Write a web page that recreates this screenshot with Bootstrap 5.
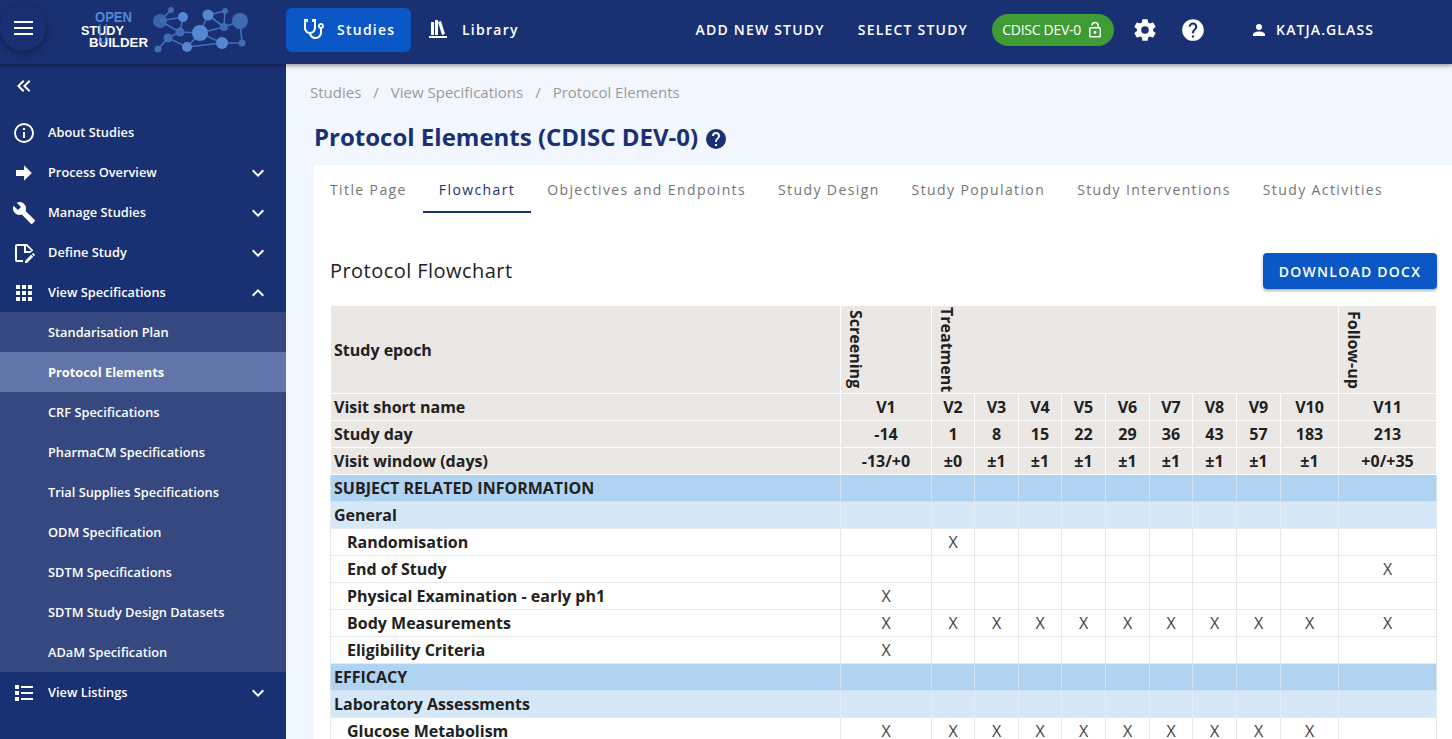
<!DOCTYPE html>
<html lang="en"><head><meta charset="utf-8"><title>Protocol Elements</title>
<link href="https://cdn.jsdelivr.net/npm/bootstrap@5.3.0/dist/css/bootstrap.min.css" rel="stylesheet">
<style>
html,body{height:739px;overflow:hidden}
body{font-family:"Open Sans",sans-serif;background:#f2f6fe;color:#212121}
.ic{fill:currentColor;display:block;flex:none}
.topbar{height:64px;background:#193073;color:#fff;box-shadow:0 2px 4px rgba(0,0,0,.35);position:relative;z-index:3;padding:0}
.burger{width:46px;height:46px;margin-top:5px;border-radius:50%;background:#193073;box-shadow:0 3px 6px rgba(0,0,0,.35);color:#fff;flex:none;border:0}
.burger span{display:block;width:19px;height:2px;background:#fff;margin:2px auto}
.logobox{width:190px;height:64px;margin-left:24px;flex:none}
.logobox text{font-family:"Liberation Sans Narrow","Liberation Sans",sans-serif;font-weight:700}
.topmain{color:#fff;font-size:14px;font-weight:600;letter-spacing:1.25px;height:44px;border-radius:6px;border:0;padding:0 0 2px;display:flex;align-items:center}
.topstudies{background:#0b57c5;width:125px;margin-left:26px;padding-left:16px;gap:11px}
.toplib{width:115px;margin-left:-1px;padding-left:16px;gap:12px;background:none}
.topacts{padding-bottom:5px}
.topact{color:#fff;font-size:14px;font-weight:600;letter-spacing:1.2px;text-transform:uppercase;background:none;border:0;padding:0}
.selbtn{margin-left:33px}
.studychip{background:#3f9c35;color:#fff;border-radius:16px;height:32px;width:122px;font-size:14px;letter-spacing:-.3px;font-weight:400;gap:5px;margin-left:24px}
.cogic{margin-left:18px}
.helpic{margin-left:22px}
.usertag{margin-left:44px;margin-right:78px;gap:8px;letter-spacing:1.1px}
.bodyrow{height:675px}
.sidepanel{width:286px;background:#193073;color:#fff;flex:none;padding-top:4px}
.collapser{height:36px;margin-bottom:8px;padding-left:12px;color:#fff}
.sideitem{height:40px;color:#fff;font-size:12.8px;font-weight:600;text-decoration:none;padding:2px 16px 0 12px}
.sideitem .lab{margin-left:12px;flex:1}
.subitem{height:40px;padding:2px 0 0 48px;background:#354880;color:#fff;font-size:12.8px;font-weight:600;text-decoration:none}
.subitem.on{background:#6274a8;font-weight:700}
.mainpane{flex:1;min-width:0;overflow:hidden}
.crumbs{margin:0;padding:18px 0 0 24px;height:54px;font-size:15px;line-height:20px;color:#9a9a9a}
.crumbs .breadcrumb-item{color:#9a9a9a}
.crumbs .breadcrumb-item+.breadcrumb-item{padding-left:12px}
.crumbs .breadcrumb-item+.breadcrumb-item::before{color:#9a9a9a;padding-right:12px}
.pagehead{height:47px;margin-left:28px;color:#193073;font-size:24px;font-weight:700;line-height:38px;gap:6px}
.pagehead .ic{margin-top:9px}
.sheet{background:#fff;margin-left:28px;height:574px;padding:0 16px}
.tabrow{height:48px;margin-left:-16px;flex-wrap:nowrap}
.tabrow .nav-link{color:#757575;font-size:14px;letter-spacing:1.39px;padding:0 16px;height:48px;line-height:50px;white-space:nowrap;border-radius:0}
.tabrow .nav-link.on{color:#193073;border-bottom:2px solid #193073}
.sheethead{height:92px;padding-top:40px}
.sheethead h2{font-size:20px;font-weight:400;letter-spacing:.45px;margin:0;line-height:36px}
.dlbtn{background:#0b57c5;color:#fff;height:36px;width:174px;margin-right:-1px;border:0;border-radius:4px;font-size:14px;font-weight:600;letter-spacing:1.25px;box-shadow:0 2px 3px rgba(0,0,0,.3);padding:0}
.flow{table-layout:fixed;width:1106px;margin:0;border-collapse:collapse;font-size:16px;line-height:24px;color:#212121}
.flow td,.flow th{padding:1px 3px;border:1px solid #e8e8e8;text-align:center;font-weight:400;white-space:nowrap;color:#444}
.flow td:first-child,.flow th:first-child{text-align:left;font-weight:700;color:#212121}
.flow .hd td,.flow .hd th{background:#ebe7e4;border-color:#fff;font-weight:700;color:#212121}
.flow .epoch{height:88px}
.flow .hd .vert{text-align:left;vertical-align:middle;padding:0 0 0 3px;font-weight:700}
.flow .vert span{writing-mode:vertical-rl;display:block;line-height:24px;height:87px;text-align:center}
.flow .soc td{background:#b0d3f2;border-color:#d3e2ee}
.flow .grp td{background:#d6e8f7;border-color:#e3edf5}
.flow td.lvl{padding-left:16px}
.w0{width:510px}.w1{width:91px}.w2{width:43px}.w3{width:44px}.w4{width:58px}.w5{width:98px}
</style></head>
<body>
<svg width="0" height="0" class="position-absolute"><defs>
<symbol id="i-steth" viewBox="0 0 24 24"><path d="M19 8C19.56 8 20 8.43 20 9S19.56 10 19 10C18.43 10 18 9.56 18 9S18.43 8 19 8M2 2V11C2 13.96 4.19 16.5 7.14 16.91C7.76 19.92 10.42 22 13.5 22C17.09 22 20 19.09 20 15.5V11.81C21.16 11.39 22 10.29 22 9C22 7.34 20.66 6 19 6S16 7.34 16 9C16 10.29 16.84 11.4 18 11.81V15.41C18 17.91 16 19.91 13.5 19.91C11.5 19.91 9.82 18.7 9.22 16.9C12 16.3 14 13.8 14 11V2H10V5H12V11C12 13.21 10.21 15 8 15S4 13.21 4 11V5H6V2H2Z"/></symbol>
<symbol id="i-shelf" viewBox="0 0 24 24"><path d="M9 3V18H12V3H9M12 5L16 18L19 17L15 4L12 5M5 5V18H8V5H5M3 19V21H21V19H3Z"/></symbol>
<symbol id="i-cog" viewBox="0 0 24 24"><path d="M12,15.5A3.5,3.5 0 0,1 8.5,12A3.5,3.5 0 0,1 12,8.5A3.5,3.5 0 0,1 15.5,12A3.5,3.5 0 0,1 12,15.5M19.43,12.97C19.47,12.65 19.5,12.33 19.5,12C19.5,11.67 19.47,11.34 19.43,11L21.54,9.37C21.73,9.22 21.78,8.95 21.66,8.73L19.66,5.27C19.54,5.05 19.27,4.96 19.05,5.05L16.56,6.05C16.04,5.66 15.5,5.32 14.87,5.07L14.5,2.42C14.46,2.18 14.25,2 14,2H10C9.75,2 9.54,2.18 9.5,2.42L9.13,5.07C8.5,5.32 7.96,5.66 7.44,6.05L4.95,5.05C4.73,4.96 4.46,5.05 4.34,5.27L2.34,8.73C2.21,8.95 2.27,9.22 2.46,9.37L4.57,11C4.53,11.34 4.5,11.67 4.5,12C4.5,12.33 4.53,12.65 4.57,12.97L2.46,14.63C2.27,14.78 2.21,15.05 2.34,15.27L4.34,18.73C4.46,18.95 4.73,19.03 4.95,18.95L7.44,17.94C7.96,18.34 8.5,18.68 9.13,18.93L9.5,21.58C9.54,21.82 9.75,22 10,22H14C14.25,22 14.46,21.82 14.5,21.58L14.87,18.93C15.5,18.67 16.04,18.34 16.56,17.94L19.05,18.95C19.27,19.03 19.54,18.95 19.66,18.73L21.66,15.27C21.78,15.05 21.73,14.78 21.54,14.63L19.43,12.97Z"/></symbol>
<symbol id="i-help" viewBox="0 0 24 24"><path d="M15.07,11.25L14.17,12.17C13.45,12.89 13,13.5 13,15H11V14.5C11,13.39 11.45,12.39 12.17,11.67L13.41,10.41C13.78,10.05 14,9.55 14,9C14,7.89 13.1,7 12,7A2,2 0 0,0 10,9H8A4,4 0 0,1 12,5A4,4 0 0,1 16,9C16,9.88 15.64,10.67 15.07,11.25M13,19H11V17H13M12,2A10,10 0 0,0 2,12A10,10 0 0,0 12,22A10,10 0 0,0 22,12C22,6.47 17.5,2 12,2Z"/></symbol>
<symbol id="i-user" viewBox="0 0 24 24"><path d="M12,4A4,4 0 0,1 16,8A4,4 0 0,1 12,12A4,4 0 0,1 8,8A4,4 0 0,1 12,4M12,14C16.42,14 20,15.79 20,18V20H4V18C4,15.79 7.58,14 12,14Z"/></symbol>
<symbol id="i-lock" viewBox="0 0 24 24"><path d="M12 13a2 2 0 1 1 0 4 2 2 0 0 1 0-4M6 8h9V6a3 3 0 0 0-6 0H7a5 5 0 0 1 10 0v2h1a2 2 0 0 1 2 2v10a2 2 0 0 1-2 2H6a2 2 0 0 1-2-2V10a2 2 0 0 1 2-2m0 2v10h12V10H6Z"/></symbol>
<symbol id="i-info" viewBox="0 0 24 24"><path d="M11,9H13V7H11M12,20C7.59,20 4,16.41 4,12C4,7.59 7.59,4 12,4C16.41,4 20,7.59 20,12C20,16.41 16.41,20 12,20M12,2A10,10 0 0,0 2,12A10,10 0 0,0 12,22A10,10 0 0,0 22,12A10,10 0 0,0 12,2M11,17H13V11H11V17Z"/></symbol>
<symbol id="i-arrow" viewBox="0 0 24 24"><path d="M4,15V9H12V4.16L19.84,12L12,19.84V15H4Z"/></symbol>
<symbol id="i-wrench" viewBox="0 0 24 24"><path d="M22.7,19L13.6,9.9C14.5,7.6 14,4.9 12.1,3C10.1,1 7.1,0.6 4.7,1.7L9,6L6,9L1.6,4.7C0.4,7.1 0.9,10.1 2.9,12.1C4.8,14 7.5,14.5 9.8,13.6L18.9,22.7C19.3,23.1 19.9,23.1 20.3,22.7L22.6,20.4C23.1,20 23.1,19.3 22.7,19Z"/></symbol>
<symbol id="i-note" viewBox="0 0 24 24"><path d="M18.13 12L19.39 10.74C19.83 10.3 20.39 10.06 21 10V9L15 3H5C3.89 3 3 3.89 3 5V19C3 20.1 3.89 21 5 21H11V19.13L11.13 19H5V5H12V12H18.13M14 4.5L19.5 10H14V4.5M19.13 13.83L21.17 15.87L15.04 22H13V19.96L19.13 13.83M22.85 14.19L21.87 15.17L19.83 13.13L20.81 12.15C21 11.95 21.33 11.95 21.53 12.15L22.85 13.47C23.05 13.67 23.05 14 22.85 14.19Z"/></symbol>
<symbol id="i-apps" viewBox="0 0 24 24"><path d="M16,20H20V16H16M16,14H20V10H16M10,8H14V4H10M16,8H20V4H16M10,14H14V10H10M4,14H8V10H4M4,20H8V16H4M10,20H14V16H10M4,8H8V4H4V8Z"/></symbol>
<symbol id="i-list" viewBox="0 0 24 24"><path d="M3,4H7V8H3V4M9,5V7H21V5H9M3,10H7V14H3V10M9,11V13H21V11H9M3,16H7V20H3V16M9,17V19H21V17H9"/></symbol>
<symbol id="i-down" viewBox="0 0 24 24"><path d="M7.41,8.58L12,13.17L16.59,8.58L18,10L12,16L6,10L7.41,8.58Z"/></symbol>
<symbol id="i-up" viewBox="0 0 24 24"><path d="M7.41,15.41L12,10.83L16.59,15.41L18,14L12,8L6,14L7.41,15.41Z"/></symbol>
<symbol id="i-dbl" viewBox="0 0 24 24"><path d="M18.41,7.41L17,6L11,12L17,18L18.41,16.59L13.83,12L18.41,7.41M12.41,7.41L11,6L5,12L11,18L12.41,16.59L7.83,12L12.41,7.41Z"/></symbol>
</defs></svg>

<nav class="topbar d-flex align-items-start">
  <button class="burger btn d-flex flex-column justify-content-center p-0" type="button" aria-label="menu"><span></span><span></span><span></span></button>
  <div class="logobox">
    <svg width="190" height="64" viewBox="70 0 190 64">
      <defs><linearGradient id="fade" x1="0" x2="1" y1="0" y2="0"><stop offset="0" stop-color="#4f82c8" stop-opacity="0"/><stop offset="1" stop-color="#4f82c8" stop-opacity=".9"/></linearGradient></defs>
      <path d="M142 21.5H160" stroke="url(#fade)" stroke-width="1.6"/>
      <g stroke="#4a7cc2" stroke-width="1.6" opacity=".85" fill="none">
        <path d="M160 21L171 10M160 21L183 17L180 32L200 33L208 15L225 11L224 27L240 21L242 43L222 43L200 33L224 27L208 15M160 21L180 32L168 38L187 47L200 33M168 38L158 49M222 43L187 47"/>
      </g>
      <g fill="#3f6db3">
        <circle cx="160" cy="21" r="7" opacity=".85"/><circle cx="171" cy="10" r="3"/><circle cx="225" cy="11" r="3"/><circle cx="158" cy="49" r="3.5"/><circle cx="242" cy="43" r="3.5"/><circle cx="168" cy="38" r="4.5"/><circle cx="240" cy="21" r="8"/><circle cx="224" cy="27" r="4"/><circle cx="180" cy="32" r="4.5"/>
      </g>
      <g fill="#5488d2">
        <circle cx="183" cy="17" r="5"/><circle cx="208" cy="15" r="5.5"/><circle cx="200" cy="33" r="8"/><circle cx="222" cy="43" r="6"/><circle cx="187" cy="47" r="5"/>
      </g>
      <text x="95" y="22" font-size="14.5" fill="#5488d2" textLength="37" lengthAdjust="spacingAndGlyphs">OPEN</text>
      <text x="81" y="34.5" font-size="13.5" fill="#fff" textLength="43" lengthAdjust="spacingAndGlyphs">STUDY</text>
      <text x="89" y="47" font-size="13.5" fill="#fff" textLength="59" lengthAdjust="spacingAndGlyphs">BUILDER</text>
      <path d="M100 24V40a3 3 0 0 0 3 3 3 3 0 0 0 3-3V24" fill="none" stroke="#5488d2" stroke-width="1.1"/>
    </svg>
  </div>
  <button class="topmain topstudies mt-2" type="button"><svg class="ic" width="24" height="24"><use href="#i-steth"/></svg>Studies</button>
  <button class="topmain toplib mt-2" type="button"><svg class="ic" width="24" height="24"><use href="#i-shelf"/></svg>Library</button>
  <div class="topacts d-flex align-items-center h-100 flex-fill">
    <button class="topact ms-auto" type="button">Add new study</button>
    <button class="topact selbtn" type="button">Select study</button>
    <span class="studychip d-inline-flex align-items-center justify-content-center">CDISC DEV-0<svg class="ic" width="18" height="18"><use href="#i-lock"/></svg></span>
    <svg class="ic cogic" width="26" height="26"><use href="#i-cog"/></svg>
    <svg class="ic helpic" width="26" height="26"><use href="#i-help"/></svg>
    <span class="topact usertag d-inline-flex align-items-center"><svg class="ic" width="18" height="18"><use href="#i-user"/></svg>katja.glass</span>
  </div>
</nav>

<div class="bodyrow d-flex">
  <aside class="sidepanel">
    <div class="collapser d-flex align-items-center"><svg class="ic" width="24" height="24"><use href="#i-dbl"/></svg></div>
    <nav class="nav flex-column flex-nowrap">
      <a class="sideitem d-flex align-items-center" href="#"><svg class="ic" width="24" height="24"><use href="#i-info"/></svg><span class="lab">About Studies</span></a>
      <a class="sideitem d-flex align-items-center" href="#"><svg class="ic" width="24" height="24"><use href="#i-arrow"/></svg><span class="lab">Process Overview</span><svg class="ic" width="24" height="24"><use href="#i-down"/></svg></a>
      <a class="sideitem d-flex align-items-center" href="#"><svg class="ic" width="24" height="24"><use href="#i-wrench"/></svg><span class="lab">Manage Studies</span><svg class="ic" width="24" height="24"><use href="#i-down"/></svg></a>
      <a class="sideitem d-flex align-items-center" href="#"><svg class="ic" width="24" height="24"><use href="#i-note"/></svg><span class="lab">Define Study</span><svg class="ic" width="24" height="24"><use href="#i-down"/></svg></a>
      <a class="sideitem d-flex align-items-center" href="#"><svg class="ic" width="24" height="24"><use href="#i-apps"/></svg><span class="lab">View Specifications</span><svg class="ic" width="24" height="24"><use href="#i-up"/></svg></a>
      <a class="subitem d-flex align-items-center" href="#">Standarisation Plan</a>
      <a class="subitem on d-flex align-items-center" href="#">Protocol Elements</a>
      <a class="subitem d-flex align-items-center" href="#">CRF Specifications</a>
      <a class="subitem d-flex align-items-center" href="#">PharmaCM Specifications</a>
      <a class="subitem d-flex align-items-center" href="#">Trial Supplies Specifications</a>
      <a class="subitem d-flex align-items-center" href="#">ODM Specification</a>
      <a class="subitem d-flex align-items-center" href="#">SDTM Specifications</a>
      <a class="subitem d-flex align-items-center" href="#">SDTM Study Design Datasets</a>
      <a class="subitem d-flex align-items-center" href="#">ADaM Specification</a>
      <a class="sideitem d-flex align-items-center" href="#"><svg class="ic" width="24" height="24"><use href="#i-list"/></svg><span class="lab">View Listings</span><svg class="ic" width="24" height="24"><use href="#i-down"/></svg></a>
    </nav>
  </aside>
  <main class="mainpane">
    <ol class="breadcrumb crumbs"><li class="breadcrumb-item">Studies</li><li class="breadcrumb-item">View Specifications</li><li class="breadcrumb-item">Protocol Elements</li></ol>
    <div class="pagehead d-flex align-items-start">Protocol Elements (CDISC DEV-0)<svg class="ic" width="24" height="24"><use href="#i-help"/></svg></div>
    <section class="sheet">
      <ul class="nav tabrow">
        <li class="nav-item"><a class="nav-link" href="#">Title Page</a></li>
        <li class="nav-item"><a class="nav-link on" href="#">Flowchart</a></li>
        <li class="nav-item"><a class="nav-link" href="#">Objectives and Endpoints</a></li>
        <li class="nav-item"><a class="nav-link" href="#">Study Design</a></li>
        <li class="nav-item"><a class="nav-link" href="#">Study Population</a></li>
        <li class="nav-item"><a class="nav-link" href="#">Study Interventions</a></li>
        <li class="nav-item"><a class="nav-link" href="#">Study Activities</a></li>
      </ul>
      <div class="sheethead d-flex justify-content-between align-items-start">
        <h2>Protocol Flowchart</h2>
        <button class="btn dlbtn" type="button">DOWNLOAD DOCX</button>
      </div>
      <table class="flow">
        <colgroup><col class="w0"><col class="w1"><col class="w2"><col class="w3"><col class="w2"><col class="w3"><col class="w3"><col class="w2"><col class="w3"><col class="w3"><col class="w4"><col class="w5"></colgroup>
        <tbody>
        <tr class="hd epoch"><td>Study epoch</td><td class="vert"><span>Screening</span></td><td class="vert" colspan="9"><span>Treatment</span></td><td class="vert"><span>Follow-up</span></td></tr>
        <tr class="hd"><td>Visit short name</td><td>V1</td><td>V2</td><td>V3</td><td>V4</td><td>V5</td><td>V6</td><td>V7</td><td>V8</td><td>V9</td><td>V10</td><td>V11</td></tr>
        <tr class="hd"><td>Study day</td><td>-14</td><td>1</td><td>8</td><td>15</td><td>22</td><td>29</td><td>36</td><td>43</td><td>57</td><td>183</td><td>213</td></tr>
        <tr class="hd"><td>Visit window (days)</td><td>-13/+0</td><td>±0</td><td>±1</td><td>±1</td><td>±1</td><td>±1</td><td>±1</td><td>±1</td><td>±1</td><td>±1</td><td>+0/+35</td></tr>
        <tr class="soc"><td>SUBJECT RELATED INFORMATION</td><td></td><td></td><td></td><td></td><td></td><td></td><td></td><td></td><td></td><td></td><td></td></tr>
        <tr class="grp"><td>General</td><td></td><td></td><td></td><td></td><td></td><td></td><td></td><td></td><td></td><td></td><td></td></tr>
        <tr><td class="lvl">Randomisation</td><td></td><td>X</td><td></td><td></td><td></td><td></td><td></td><td></td><td></td><td></td><td></td></tr>
        <tr><td class="lvl">End of Study</td><td></td><td></td><td></td><td></td><td></td><td></td><td></td><td></td><td></td><td></td><td>X</td></tr>
        <tr><td class="lvl">Physical Examination - early ph1</td><td>X</td><td></td><td></td><td></td><td></td><td></td><td></td><td></td><td></td><td></td><td></td></tr>
        <tr><td class="lvl">Body Measurements</td><td>X</td><td>X</td><td>X</td><td>X</td><td>X</td><td>X</td><td>X</td><td>X</td><td>X</td><td>X</td><td>X</td></tr>
        <tr><td class="lvl">Eligibility Criteria</td><td>X</td><td></td><td></td><td></td><td></td><td></td><td></td><td></td><td></td><td></td><td></td></tr>
        <tr class="soc"><td>EFFICACY</td><td></td><td></td><td></td><td></td><td></td><td></td><td></td><td></td><td></td><td></td><td></td></tr>
        <tr class="grp"><td>Laboratory Assessments</td><td></td><td></td><td></td><td></td><td></td><td></td><td></td><td></td><td></td><td></td><td></td></tr>
        <tr><td class="lvl">Glucose Metabolism</td><td>X</td><td>X</td><td>X</td><td>X</td><td>X</td><td>X</td><td>X</td><td>X</td><td>X</td><td>X</td><td></td></tr>
        </tbody>
      </table>
    </section>
  </main>
</div>
<script src="https://cdn.jsdelivr.net/npm/bootstrap@5.3.0/dist/js/bootstrap.bundle.min.js"></script>
</body></html>
